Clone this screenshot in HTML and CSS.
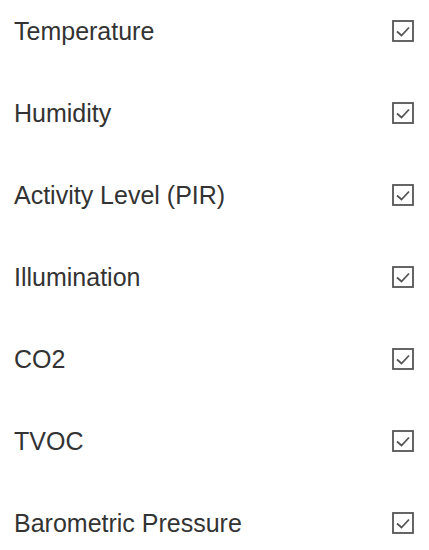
FILE: index.html
```html
<!DOCTYPE html>
<html>
<head>
<meta charset="utf-8">
<link rel="stylesheet" href="styles.css">
</head>
<body>
<ul class="list">
  <li class="row"><span class="label">Temperature</span><span class="check"><svg viewBox="0 0 22 22" width="22" height="22"><rect x="1" y="1" width="20" height="20" fill="none" stroke="#555" stroke-width="1.8"/><path d="M5 11.5 L9.5 15.5 L17 7.5" fill="none" stroke="#555" stroke-width="1.8"/></svg></span></li>
  <li class="row"><span class="label">Humidity</span><span class="check"><svg viewBox="0 0 22 22" width="22" height="22"><rect x="1" y="1" width="20" height="20" fill="none" stroke="#555" stroke-width="1.8"/><path d="M5 11.5 L9.5 15.5 L17 7.5" fill="none" stroke="#555" stroke-width="1.8"/></svg></span></li>
  <li class="row"><span class="label">Activity Level (PIR)</span><span class="check"><svg viewBox="0 0 22 22" width="22" height="22"><rect x="1" y="1" width="20" height="20" fill="none" stroke="#555" stroke-width="1.8"/><path d="M5 11.5 L9.5 15.5 L17 7.5" fill="none" stroke="#555" stroke-width="1.8"/></svg></span></li>
  <li class="row"><span class="label">Illumination</span><span class="check"><svg viewBox="0 0 22 22" width="22" height="22"><rect x="1" y="1" width="20" height="20" fill="none" stroke="#555" stroke-width="1.8"/><path d="M5 11.5 L9.5 15.5 L17 7.5" fill="none" stroke="#555" stroke-width="1.8"/></svg></span></li>
  <li class="row"><span class="label">CO2</span><span class="check"><svg viewBox="0 0 22 22" width="22" height="22"><rect x="1" y="1" width="20" height="20" fill="none" stroke="#555" stroke-width="1.8"/><path d="M5 11.5 L9.5 15.5 L17 7.5" fill="none" stroke="#555" stroke-width="1.8"/></svg></span></li>
  <li class="row"><span class="label">TVOC</span><span class="check"><svg viewBox="0 0 22 22" width="22" height="22"><rect x="1" y="1" width="20" height="20" fill="none" stroke="#555" stroke-width="1.8"/><path d="M5 11.5 L9.5 15.5 L17 7.5" fill="none" stroke="#555" stroke-width="1.8"/></svg></span></li>
  <li class="row"><span class="label">Barometric Pressure</span><span class="check"><svg viewBox="0 0 22 22" width="22" height="22"><rect x="1" y="1" width="20" height="20" fill="none" stroke="#555" stroke-width="1.8"/><path d="M5 11.5 L9.5 15.5 L17 7.5" fill="none" stroke="#555" stroke-width="1.8"/></svg></span></li>
</ul>
</body>
</html>
```
FILE: styles.css
```css
html, body {
  margin: 0;
  padding: 0;
  background: #fff;
}
.list {
  list-style: none;
  margin: 0;
  padding: 0 15px 0 14px;
  font-family: "Liberation Sans", Arial, sans-serif;
  font-size: 25px;
  line-height: 28px;
  color: #333;
}
.row {
  display: flex;
  align-items: center;
  justify-content: space-between;
  box-sizing: border-box;
  height: 82px;
  padding-top: 17px;
  padding-bottom: 37px;
}
.check {
  display: flex;
  width: 22px;
  height: 22px;
}
```
